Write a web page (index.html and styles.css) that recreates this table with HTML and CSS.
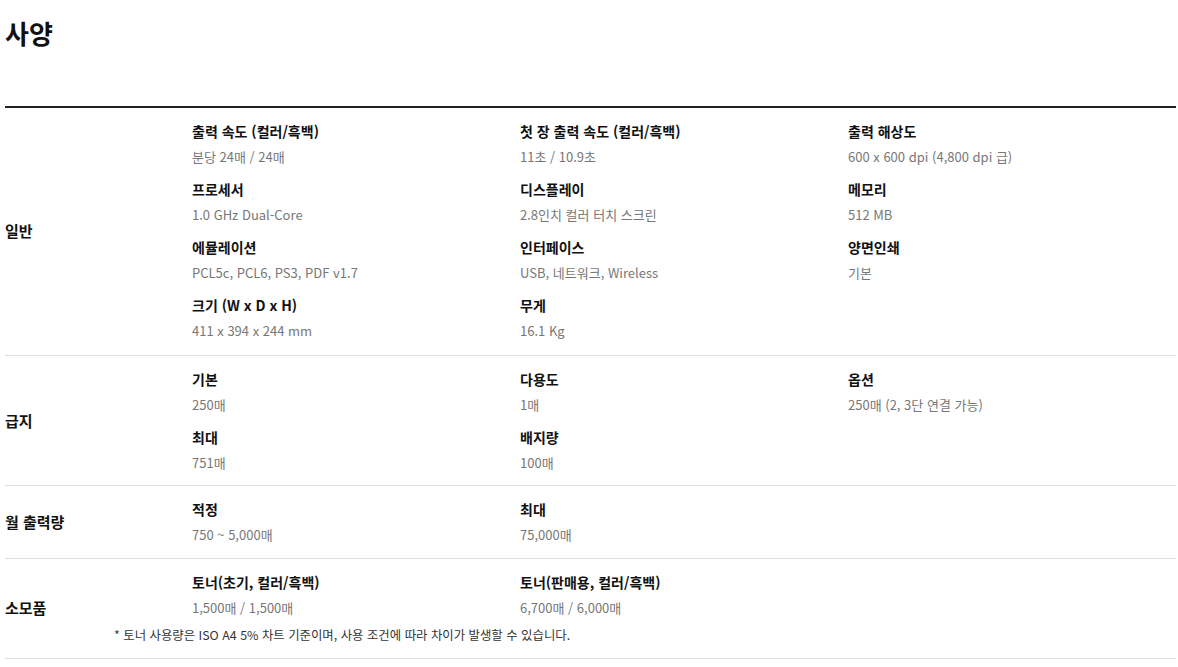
FILE: index.html
```html
<!DOCTYPE html>
<html lang="ko">
<head>
    <meta charset="UTF-8">
    <meta name="viewport" content="width=device-width, initial-scale=1.0">
    <title>사양</title>
    <link rel="stylesheet" href="styles.css">
</head>
<body>
    <div class="spec">
        <h1 class="spec-title">사양</h1>

        <div class="spec-table">
            <!-- 일반 -->
            <div class="spec-row row-general">
                <div class="spec-label">일반</div>
                <div class="spec-items">
                    <div class="item"><p class="item-name">출력 속도 (컬러/흑백)</p><p class="item-value">분당 24매 / 24매</p></div>
                    <div class="item"><p class="item-name">첫 장 출력 속도 (컬러/흑백)</p><p class="item-value">11초 / 10.9초</p></div>
                    <div class="item"><p class="item-name">출력 해상도</p><p class="item-value">600 x 600 dpi (4,800 dpi 급)</p></div>
                    <div class="item"><p class="item-name">프로세서</p><p class="item-value">1.0 GHz Dual-Core</p></div>
                    <div class="item"><p class="item-name">디스플레이</p><p class="item-value">2.8인치 컬러 터치 스크린</p></div>
                    <div class="item"><p class="item-name">메모리</p><p class="item-value">512 MB</p></div>
                    <div class="item"><p class="item-name">에뮬레이션</p><p class="item-value">PCL5c, PCL6, PS3, PDF v1.7</p></div>
                    <div class="item"><p class="item-name">인터페이스</p><p class="item-value">USB, 네트워크, Wireless</p></div>
                    <div class="item"><p class="item-name">양면인쇄</p><p class="item-value">기본</p></div>
                    <div class="item"><p class="item-name">크기 (W x D x H)</p><p class="item-value">411 x 394 x 244 mm</p></div>
                    <div class="item"><p class="item-name">무게</p><p class="item-value">16.1 Kg</p></div>
                </div>
            </div>

            <!-- 급지 -->
            <div class="spec-row row-paper">
                <div class="spec-label">급지</div>
                <div class="spec-items">
                    <div class="item"><p class="item-name">기본</p><p class="item-value">250매</p></div>
                    <div class="item"><p class="item-name">다용도</p><p class="item-value">1매</p></div>
                    <div class="item"><p class="item-name">옵션</p><p class="item-value">250매 (2, 3단 연결 가능)</p></div>
                    <div class="item"><p class="item-name">최대</p><p class="item-value">751매</p></div>
                    <div class="item"><p class="item-name">배지량</p><p class="item-value">100매</p></div>
                </div>
            </div>

            <!-- 월 출력량 -->
            <div class="spec-row">
                <div class="spec-label">월 출력량</div>
                <div class="spec-items">
                    <div class="item"><p class="item-name">적정</p><p class="item-value">750 ~ 5,000매</p></div>
                    <div class="item"><p class="item-name">최대</p><p class="item-value">75,000매</p></div>
                </div>
            </div>

            <!-- 소모품 -->
            <div class="spec-row row-supplies">
                <div class="spec-label">소모품</div>
                <div class="spec-items">
                    <div class="item"><p class="item-name">토너(초기, 컬러/흑백)</p><p class="item-value">1,500매 / 1,500매</p></div>
                    <div class="item"><p class="item-name">토너(판매용, 컬러/흑백)</p><p class="item-value">6,700매 / 6,000매</p></div>
                    <p class="spec-note">* 토너 사용량은 ISO A4 5% 차트 기준이며, 사용 조건에 따라 차이가 발생할 수 있습니다.</p>
                </div>
            </div>
        </div>
    </div>
</body>
</html>
```

FILE: styles.css
```css
body {
    margin: 0;
    background: #fff;
    color: #111;
    font-family: "Noto Sans CJK KR", "Noto Sans", sans-serif;
}

.spec {
    padding: 0 2px 0 5px;
}

.spec-title {
    margin: 0;
    height: 106px;
    padding-top: 17px;
    box-sizing: border-box;
    font-size: 26px;
    line-height: 32px;
    font-weight: 700;
    color: #111;
}

/* Table */
.spec-table {
    border-top: 2px solid #222;
}

.spec-row {
    display: grid;
    grid-template-columns: 187px 1fr;
    align-items: center;
    padding: 12px 0;
    border-bottom: 1px solid #ddd;
}

.row-general {
    padding-bottom: 13px;
}

.row-paper {
    padding-bottom: 11px;
}

.row-supplies {
    padding-bottom: 13px;
}

.spec-label {
    font-size: 15px;
    font-weight: 700;
    line-height: 22px;
}

.spec-items {
    display: grid;
    grid-template-columns: repeat(3, 1fr);
    row-gap: 10px;
}

.item p {
    margin: 0;
}

.item-name {
    font-size: 14px;
    font-weight: 700;
    line-height: 22px;
    color: #111;
}

.item-value {
    margin-top: 4px !important;
    font-size: 13px;
    line-height: 22px;
    color: #777;
}

.spec-note {
    grid-column: 1 / -1;
    margin: -4px 0 0 -78px;
    font-size: 12.4px;
    line-height: 20px;
    color: #333;
}
```
